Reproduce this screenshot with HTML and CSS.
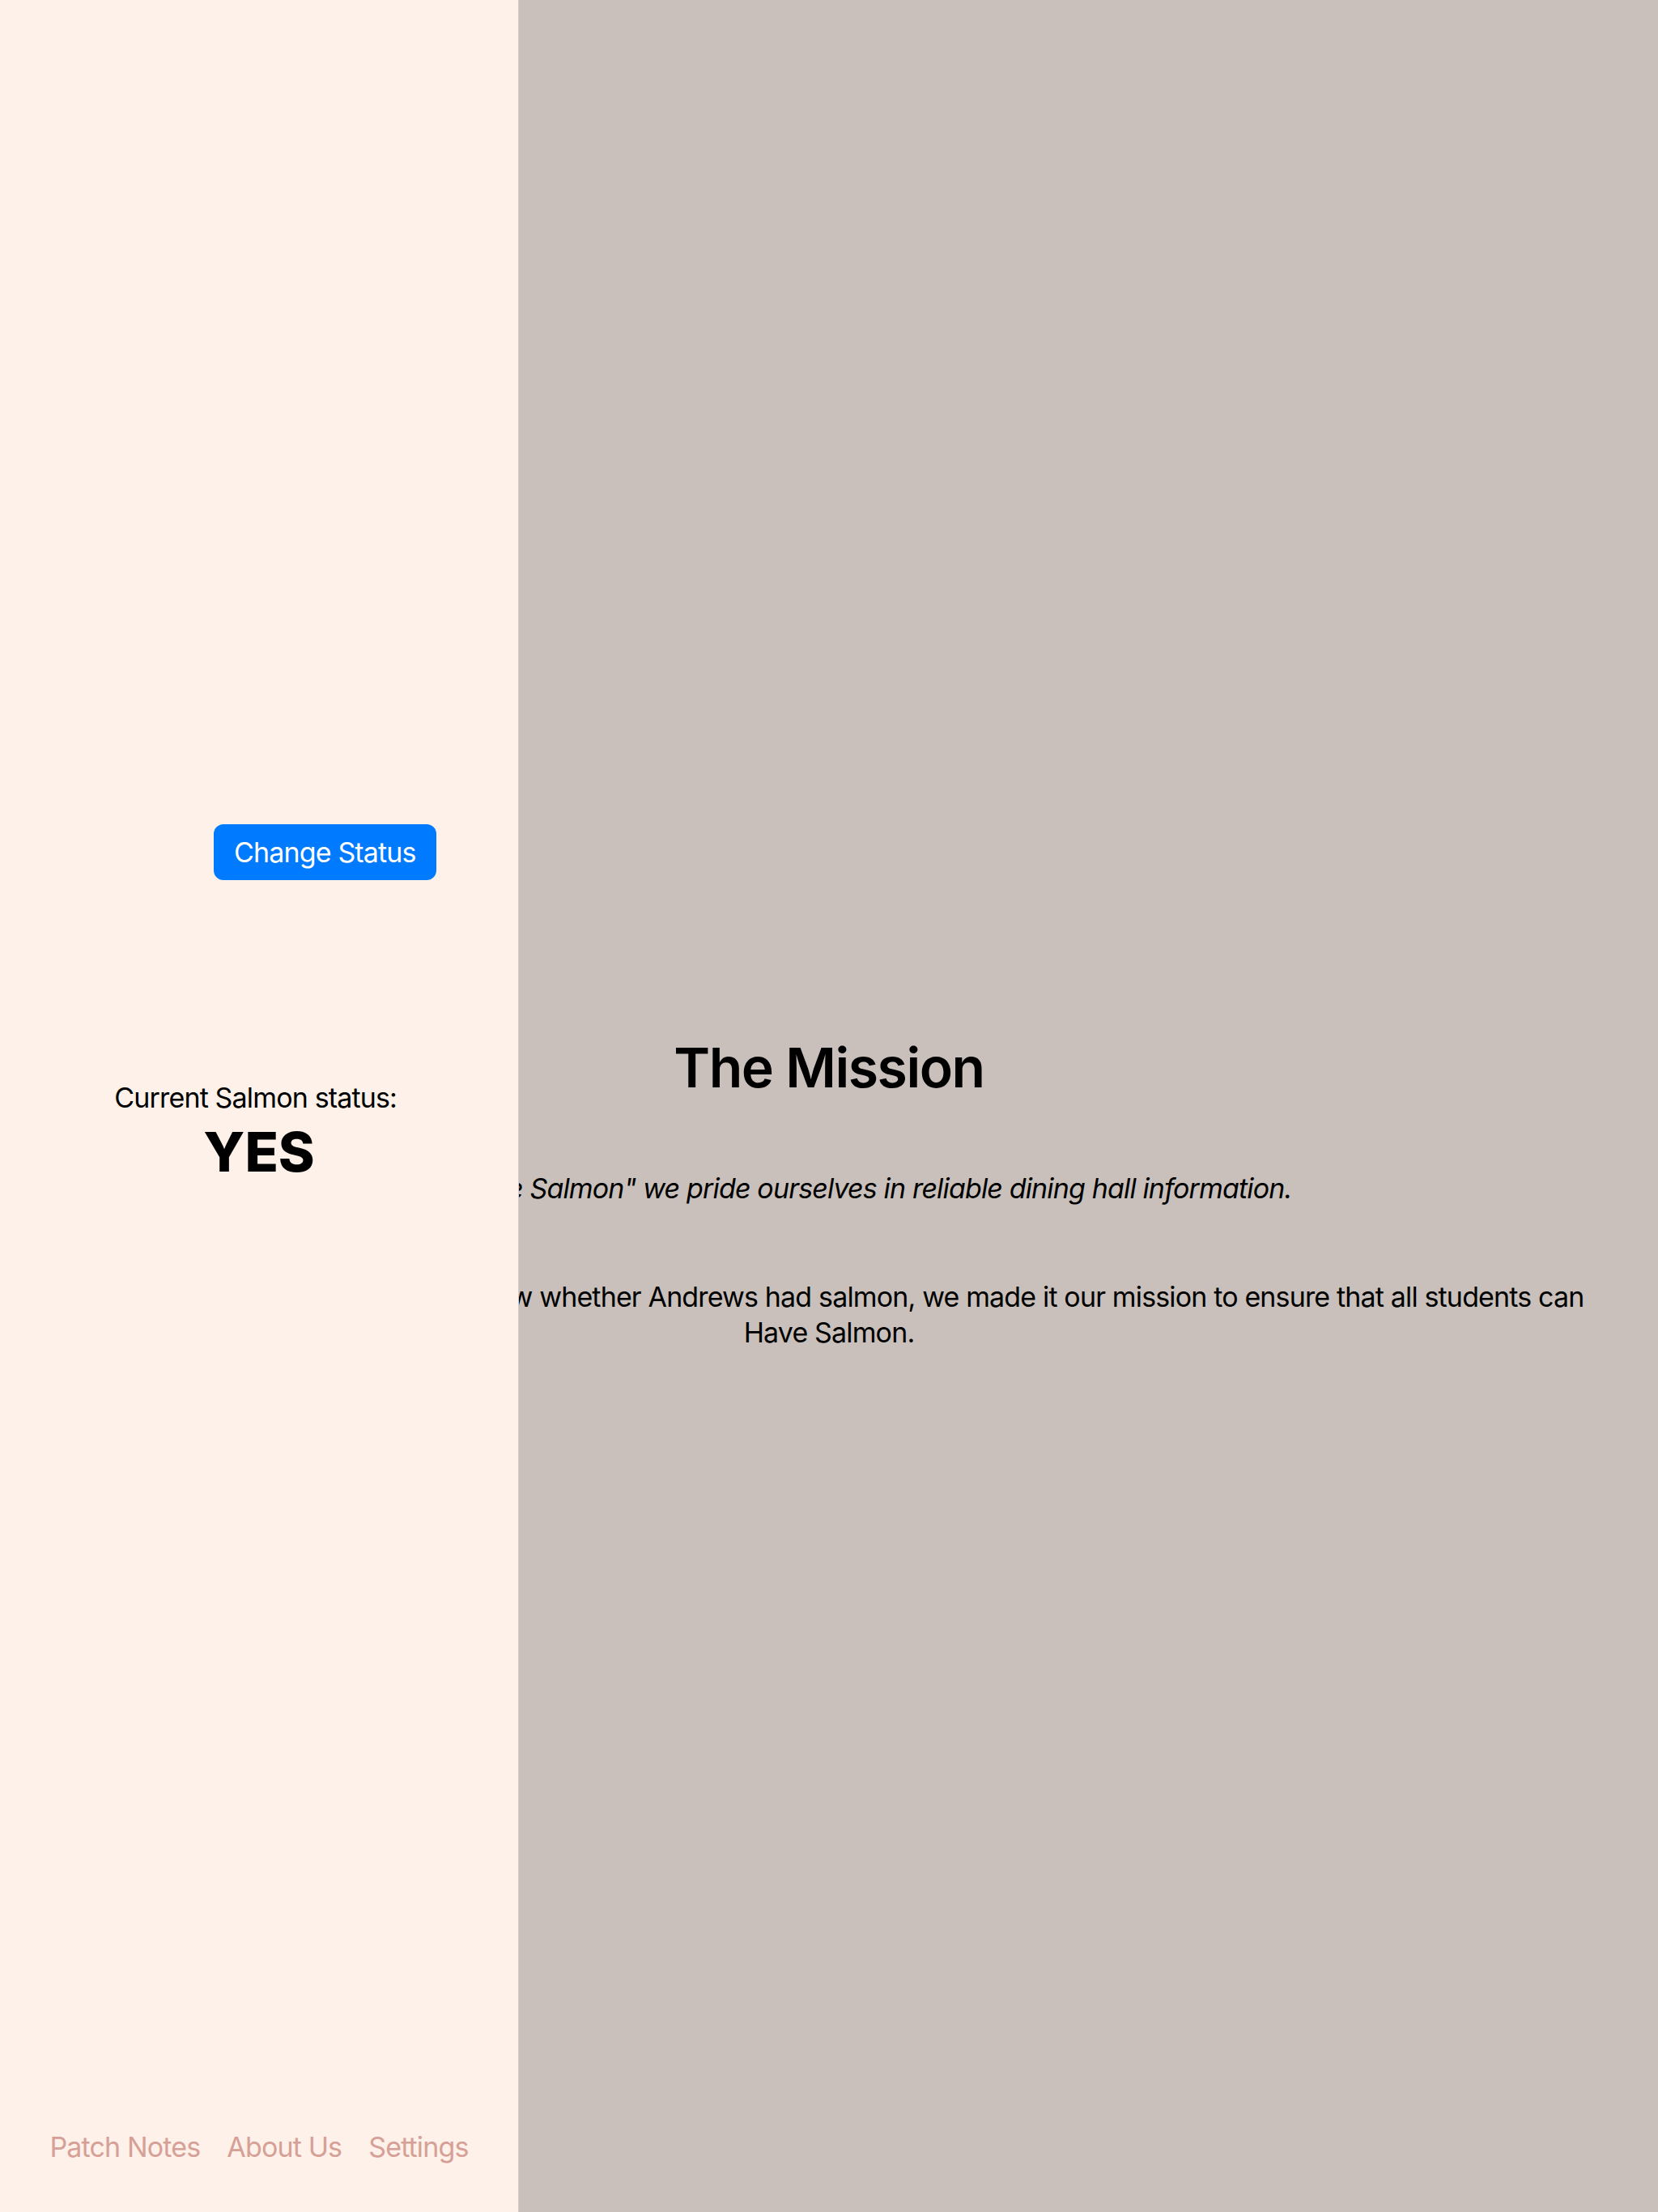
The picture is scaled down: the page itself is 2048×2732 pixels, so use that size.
FILE: index.html
```html
<!DOCTYPE html>
<html lang="en">
<head>
<meta charset="utf-8">
<title>Have Salmon</title>
<link rel="stylesheet" href="styles.css">
</head>
<body>
<div class="app">
  <main class="detail">
    <h1 class="title">The Mission</h1>
    <p class="tagline">At the "Have Salmon" we pride ourselves in reliable dining hall information.</p>
    <p class="mission">Annoyed at never being able to know whether Andrews had salmon, we made it our mission to ensure that all students can Have Salmon.</p>
  </main>
  <aside class="sidebar">
    <div class="sidebar-body">
      <div class="action-row">
        <button class="status-btn" type="button">Change Status</button>
      </div>
      <div class="status">
        <div class="status-label">Current Salmon status: </div>
        <div class="status-value">YES</div>
      </div>
    </div>
    <nav class="sidebar-footer">
      <a class="footer-link" href="#">Patch Notes</a>
      <a class="footer-link" href="#">About Us</a>
      <a class="footer-link" href="#">Settings</a>
    </nav>
  </aside>
</div>
</body>
</html>
```
FILE: styles.css
```css
* { box-sizing: border-box; }
html, body { margin: 0; padding: 0; }
body {
  font-family: Inter, "Noto Sans", "Liberation Sans", sans-serif;
  color: #000;
  background: #c9c0bb;
}
.app {
  display: grid;
  grid-template-columns: 1fr;
  grid-template-rows: 2732px;
  width: 2048px;
  height: 2732px;
  overflow: hidden;
}
.detail {
  grid-area: 1 / 1;
  background: #c9c0bb;
  padding: 1277px 72px 0;
  text-align: center;
}
.title {
  margin: 0;
  font-size: 68px;
  line-height: 82px;
  font-weight: 600;
  letter-spacing: -1.5px;
}
.tagline {
  margin: 87px 0 0;
  font-size: 34px;
  line-height: 44px;
  font-style: italic;
  letter-spacing: -0.85px;
}
.mission {
  margin: 90px 0 0;
  font-size: 34px;
  line-height: 44px;
  letter-spacing: -0.85px;
}
.sidebar {
  grid-area: 1 / 1;
  justify-self: start;
  position: relative;
  z-index: 1;
  width: 641px;
  height: 2732px;
  background: #fdf1e9;
  border-right: 1px solid #d3cecc;
  display: flex;
  flex-direction: column;
}
.sidebar-body {
  padding-top: 1018px;
}
.action-row {
  display: flex;
  padding-left: 264px;
}
.status-btn {
  height: 69px;
  padding: 0 25px;
  border: 0;
  border-radius: 12px;
  background: #007aff;
  color: #fff;
  font-family: inherit;
  font-size: 34px;
  line-height: 69px;
  font-weight: 400;
  letter-spacing: -0.85px;
}
.status {
  margin-top: 247px;
  text-align: center;
}
.status-label {
  font-size: 34px;
  line-height: 44px;
  letter-spacing: -0.85px;
  white-space: pre;
}
.status-value {
  margin-top: 3px;
  font-size: 68px;
  line-height: 82px;
  font-weight: 800;
}
.sidebar-footer {
  margin-top: auto;
  padding-bottom: 58px;
  display: flex;
  justify-content: center;
  gap: 33px;
}
.footer-link {
  font-size: 34px;
  line-height: 44px;
  color: #d6a097;
  text-decoration: none;
  letter-spacing: -0.85px;
}
```
